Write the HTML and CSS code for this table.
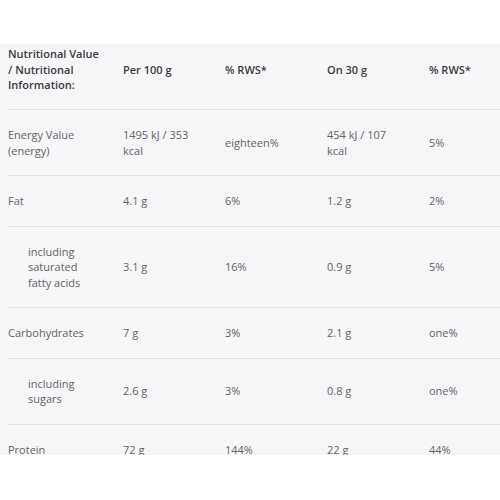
FILE: index.html
```html
<!DOCTYPE html>
<html>
<head>
<meta charset="utf-8">
<link rel="stylesheet" href="styles.css">
</head>
<body>
<div class="top-space"></div>
<div class="panel">
  <table class="nutri">
    <colgroup>
      <col class="c1"><col class="c2"><col class="c2"><col class="c2"><col class="c2">
    </colgroup>
    <thead>
      <tr>
        <th>Nutritional Value / Nutritional Information:</th>
        <th>Per 100 g</th>
        <th>% RWS*</th>
        <th>On 30 g</th>
        <th>% RWS*</th>
      </tr>
    </thead>
    <tbody>
      <tr>
        <td>Energy Value (energy)</td>
        <td>1495 kJ / 353 kcal</td>
        <td>eighteen%</td>
        <td>454 kJ / 107 kcal</td>
        <td>5%</td>
      </tr>
      <tr>
        <td>Fat</td>
        <td>4.1 g</td>
        <td>6%</td>
        <td>1.2 g</td>
        <td>2%</td>
      </tr>
      <tr>
        <td class="sub">including saturated fatty acids</td>
        <td>3.1 g</td>
        <td>16%</td>
        <td>0.9 g</td>
        <td>5%</td>
      </tr>
      <tr>
        <td>Carbohydrates</td>
        <td>7 g</td>
        <td>3%</td>
        <td>2.1 g</td>
        <td>one%</td>
      </tr>
      <tr>
        <td class="sub">including sugars</td>
        <td>2.6 g</td>
        <td>3%</td>
        <td>0.8 g</td>
        <td>one%</td>
      </tr>
      <tr>
        <td>Protein</td>
        <td>72 g</td>
        <td>144%</td>
        <td>22 g</td>
        <td>44%</td>
      </tr>
    </tbody>
  </table>
</div>
</body>
</html>
```

FILE: styles.css
```css
html, body {
  margin: 0;
  padding: 0;
  background: #ffffff;
}

body {
  font-family: "Open Sans", "Liberation Sans", sans-serif;
  font-size: 11px;
  line-height: 15.5px;
  color: #636366;
}

.top-space {
  height: 44px;
}

.panel {
  height: 411px;
  overflow: hidden;
  background: #f6f6f8;
  padding-left: 8px;
}

.nutri {
  border-collapse: collapse;
  table-layout: fixed;
  width: 523px;
}

.c1 { width: 115px; }
.c2 { width: 102px; }

.nutri th,
.nutri td {
  text-align: left;
  vertical-align: middle;
  padding: 17px 22px 17px 0;
  border-bottom: 1px solid #e3e3e6;
}

.nutri th:first-child,
.nutri td:first-child {
  padding-right: 24px;
}

.nutri th {
  padding-top: 2px;
  padding-bottom: 16.5px;
  font-weight: 600;
  color: #3a3a3c;
}

.nutri td.sub {
  padding-left: 20px;
}
```
